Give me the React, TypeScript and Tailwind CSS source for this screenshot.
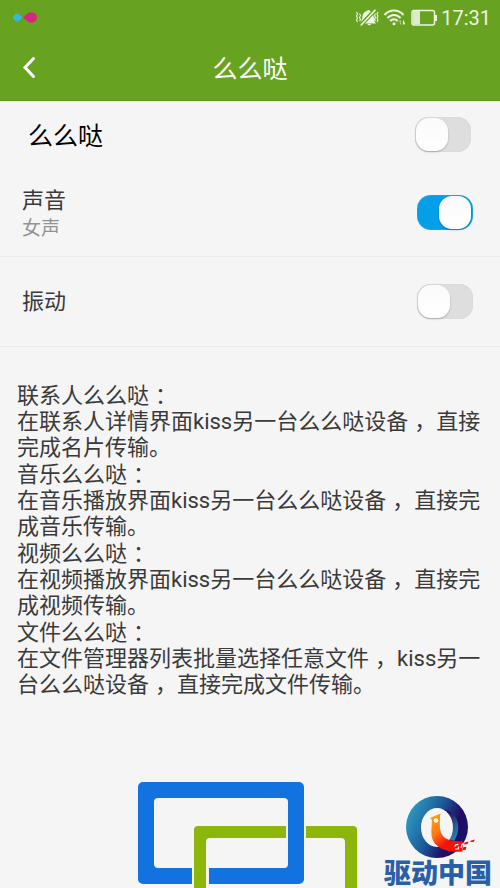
import type { ReactNode } from "react";

const switchClass =
  "relative h-[35px] w-14 shrink-0 cursor-pointer appearance-none rounded-[14px] bg-[#dedede] shadow-[inset_0_0_1px_#bdbdbd] before:absolute before:top-px before:left-px before:h-[33px] before:w-8 before:rounded-[13px] before:bg-linear-to-b before:from-[#fafafa] before:to-white before:shadow-[0_1px_2px_rgba(0,0,0,0.25)] checked:bg-[#049fe8] checked:before:left-[22px]";

/* Full-width punctuation set towards the middle of its cell. */
function Mark({ children }: { children: string }) {
  return <span className="pl-1.5">{children}</span>;
}

function Tip({ title, children }: { title: string; children: ReactNode }) {
  return (
    <section>
      <h2>
        {title}
        <Mark>：</Mark>
      </h2>
      <p>{children}</p>
    </section>
  );
}

function StatusBar() {
  return (
    <div className="flex h-9 items-center justify-between pr-[9px] pl-3">
      <svg className="h-3 w-[26px]" viewBox="0 0 26 12" aria-hidden="true">
        <path d="M10.500 5.500 7.500 8.200a3.700 3.700 0 1 1 0-5.400Z" fill="#36b8dc" />
        <path d="M11 5.500 15.500 1.400C20 -1.500 25 1.500 25 5.500S20 12.500 15.500 9.600Z" fill="#d7267d" />
      </svg>
      <div className="flex items-center text-[#eef5e3]">
        <svg className="h-5 w-6" viewBox="0 0 24 20" fill="none" stroke="currentColor" aria-hidden="true">
          <path d="M5 14.500C7 13 7 11 7.500 8c.500-3 2.500-4.400 4.500-5a1.600 1.600 0 0 1 3 0l1 .500L5.500 14.500Z" fill="currentColor" stroke="none" />
          <path d="M18.200 6.500C19.200 11 19 13.500 21 15.500H9.500ZM12 16h4.500l-2.200 1.500Z" fill="currentColor" stroke="none" />
          <path d="M5.800 17.500 20.500 1.800" stroke="#67a422" strokeWidth="3.600" />
          <path d="M5.800 17.500 20.500 1.800" strokeWidth="1.600" />
          <path d="m1.500 4 1 2-1 2 1 2-1 2 1 2M4.500 5.500l1 2-1 2 1 2-1 1.500M20.500 5.500l-1 2 1 2-1 2 1 1.500M23 4l-1 2 1 2-1 2 1 2-1 2" strokeWidth="1.100" />
        </svg>
        <svg className="ml-1 h-5 w-6" viewBox="0 0 24 20" fill="none" stroke="currentColor" aria-hidden="true">
          <path d="M1.500 7C6.500 1 15.500 1 20.500 7M4.500 10.200c3.500-4.400 9.500-4.400 13 0M7.200 13.200c2-2.600 5.600-2.600 7.600 0" strokeWidth="2" />
          <circle cx="11" cy="15.800" r="1.500" fill="currentColor" stroke="none" />
          <path d="M17.500 16.500v-4m-1.200 1.500 1.200-1.500" strokeWidth="1.200" strokeOpacity="0.500" />
          <path d="M20.500 12.500v4m1.400-1.800-1.400 1.800" strokeWidth="1.200" />
        </svg>
        <svg className="ml-1 h-[18px] w-[26px]" viewBox="0 0 26 18" aria-hidden="true">
          <rect x="1" y="1.500" width="22.500" height="14.500" rx="2" fill="none" stroke="currentColor" strokeWidth="1.500" />
          <path d="M2 2h7v13.500H2Z" fill="#dcebc9" />
          <path d="M24 6h2v6h-2Z" fill="currentColor" />
        </svg>
        <time className="ml-1 text-[20px] leading-6">17:31</time>
      </div>
    </div>
  );
}

function Rings() {
  return (
    <svg className="mx-auto h-[107px] w-56" viewBox="0 0 224 107" fill="none" aria-hidden="true">
      <path
        fillRule="evenodd"
        fill="#1272df"
        d="M5 1h156a5 5 0 0 1 5 5v92a5 5 0 0 1-5 5H5a5 5 0 0 1-5-5V6a5 5 0 0 1 5-5ZM20 17a4 4 0 0 0-4 4v62a4 4 0 0 0 4 4h126a4 4 0 0 0 4-4V21a4 4 0 0 0-4-4Z"
      />
      <path d="M54 86h17v18H54ZM148 44h20v13h-20Z" fill="#f5f5f5" />
      <path d="M150 43h16v16h-16Z" fill="#1272df" />
      <path
        fill="#8cb70a"
        d="M56 107V49a4 4 0 0 1 4-4h88v12H72a4 4 0 0 0-4 4v46ZM168 45h47a4 4 0 0 1 4 4v58h-12V61a4 4 0 0 0-4-4h-35Z"
      />
    </svg>
  );
}

function Brand() {
  return (
    <div className="absolute right-2 bottom-0 flex flex-col items-center">
      <svg className="h-16 w-[76px]" viewBox="-5 0 76 64" aria-hidden="true">
        <defs>
          <linearGradient id="ring" x1="0" y1="0.250" x2="1" y2="0.700">
            <stop offset="0" stopColor="#2f9fc3" />
            <stop offset="0.450" stopColor="#1b5998" />
            <stop offset="0.750" stopColor="#210b63" />
            <stop offset="1" stopColor="#1c1569" />
          </linearGradient>
          <linearGradient id="inner" x1="0" y1="0" x2="0.600" y2="1">
            <stop offset="0.200" stopColor="#220d62" />
            <stop offset="1" stopColor="#2b7cb2" />
          </linearGradient>
          <linearGradient id="bird" x1="0" y1="0" x2="0.700" y2="1">
            <stop offset="0" stopColor="#ffa613" />
            <stop offset="0.450" stopColor="#ff7616" />
            <stop offset="0.750" stopColor="#f5120b" />
          </linearGradient>
        </defs>
        <circle cx="32" cy="31" r="31" fill="url(#ring)" />
        <path d="M38 13c16 3 19 20 11 32l-6-2Z" fill="url(#inner)" />
        <ellipse cx="32" cy="31.500" rx="16" ry="19.500" fill="#f5f5f5" />
        <path d="M25 22 35.500 17.500c-.800 5-.800 10-.500 15 1 7 5 11.500 14 12.500l9 .500-.500 10C42 57 28 52 26.500 39c-.500-5 .800-11 .200-15.500Z" fill="url(#bird)" />
        <path d="M49.500 50.500c.800-1.600 2-2.200 4-2M50 53h3.500v-2.500M57.500 47.500l-1.500 4.500" stroke="#f5f5f5" strokeWidth="1.200" fill="none" />
        <path d="m59.500 46.500 4-1-1 2.500-3.500.500ZM58.500 51h3l-1 3h-3ZM66 44.500l4-1-1.500 2.500H65Z" fill="#f5120b" />
        <circle cx="31" cy="24.500" r="2.300" fill="#fff" />
      </svg>
      <span className="text-[27px] leading-7 font-black text-[#285fa8]">驱动中国</span>
    </div>
  );
}

export default function App() {
  return (
    <div className="relative min-h-screen overflow-hidden bg-[#f5f5f5] font-[Roboto,'Noto_Sans_CJK_SC',sans-serif] text-[#3a3a3a]">
      <header className="border-b border-[#5a981a] bg-[#67a320] text-white">
        <StatusBar />
        <div className="grid h-16 grid-cols-[60px_1fr_60px] items-center">
          <button type="button" aria-label="返回" className="flex h-full items-center pl-[22px]">
            <svg className="h-6 w-4" viewBox="0 0 16 24" fill="none" stroke="currentColor" strokeWidth="3" strokeLinecap="round" aria-hidden="true">
              <path d="M11.500 2.500 3 11.500l8.500 9" />
            </svg>
          </button>
          <h1 className="pt-1 text-center text-[25px] leading-8">么么哒</h1>
        </div>
      </header>
      <main>
        <div className="flex h-[67px] items-center justify-between pr-[29px] pl-7">
          <label htmlFor="kiss" className="pt-1 text-[25px] leading-8 text-black">么么哒</label>
          <input id="kiss" type="checkbox" role="switch" className={switchClass} />
        </div>
        <div className="flex h-[89px] items-center justify-between border-b border-[#e9ebed] pr-[27px] pl-[22px]">
          <label htmlFor="sound" className="flex flex-col pt-0.5">
            <span className="text-[22px] leading-8">声音</span>
            <span className="text-[19px] leading-6 text-[#929292]">女声</span>
          </label>
          <input id="sound" type="checkbox" role="switch" defaultChecked className={switchClass} />
        </div>
        <div className="flex h-[90px] items-center justify-between border-b border-[#e9ebed] pr-[27px] pl-[22px]">
          <label htmlFor="vibrate" className="text-[22px] leading-8">振动</label>
          <input id="vibrate" type="checkbox" role="switch" className={switchClass} />
        </div>
        <div className="flex flex-col gap-px px-[17px] pt-9 pb-[83px] text-[22px] leading-[26px]">
          <Tip title="联系人么么哒">
            在联系人详情界面kiss另一台么么哒设备<Mark>，</Mark>直接完成名片传输。
          </Tip>
          <Tip title="音乐么么哒">
            在音乐播放界面kiss另一台么么哒设备<Mark>，</Mark>直接完成音乐传输。
          </Tip>
          <Tip title="视频么么哒">
            在视频播放界面kiss另一台么么哒设备<Mark>，</Mark>直接完成视频传输。
          </Tip>
          <Tip title="文件么么哒">
            在文件管理器列表批量选择任意文件<Mark>，</Mark>kiss另一台么么哒设备<Mark>，</Mark>直接完成文件传输。
          </Tip>
        </div>
        <Rings />
      </main>
      <Brand />
    </div>
  );
}
